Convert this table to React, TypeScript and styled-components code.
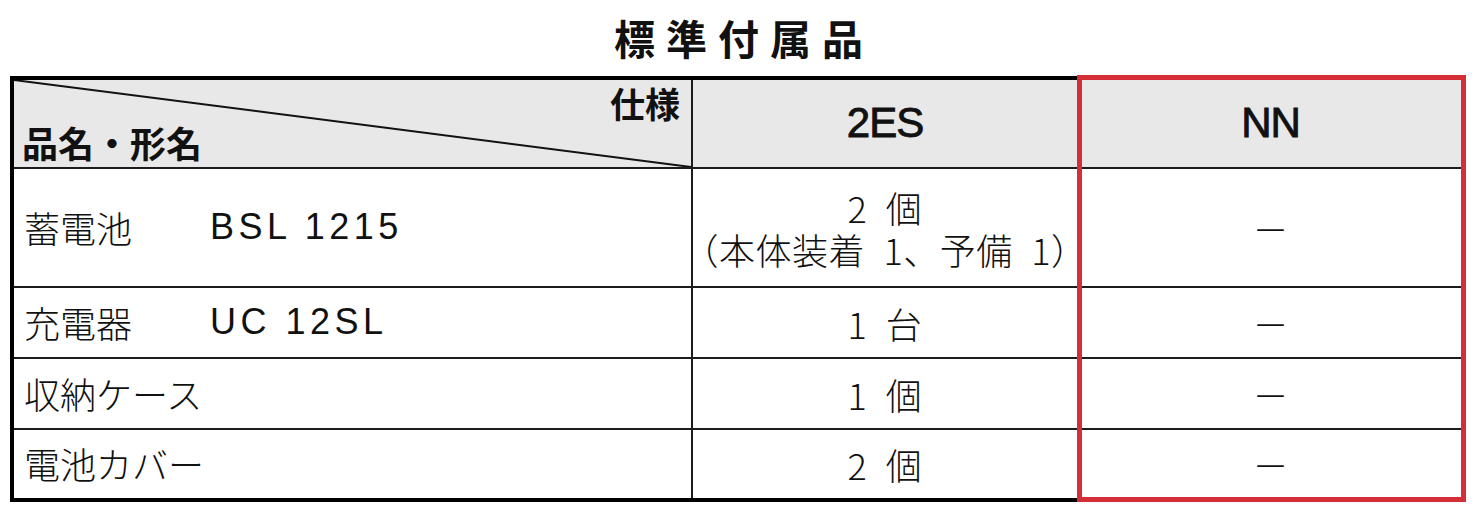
import React from "react";
import styled, { createGlobalStyle } from "styled-components";

const GlobalStyle = createGlobalStyle`
  html, body {
    margin: 0;
    padding: 0;
    background: #ffffff;
  }
  body {
    font-family: "Noto Sans CJK JP", "Liberation Sans", sans-serif;
    color: #111111;
  }
`;

interface Item {
  name: string;
  model?: string;
  spec: string[];
  nn: string;
}

const items: Item[] = [
  { name: "蓄電池", model: "BSL 1215", spec: ["2\u2002個", "（本体装着\u20021、予備\u20021）"], nn: "－" },
  { name: "充電器", model: "UC 12SL", spec: ["1\u2002台"], nn: "－" },
  { name: "収納ケース", spec: ["1\u2002個"], nn: "－" },
  { name: "電池カバー", spec: ["2\u2002個"], nn: "－" },
];

export default function App() {
  return (
    <>
      <GlobalStyle />
      <Page>
        <Title>標準付属品</Title>
        <Table>
          <CornerCell>
            <Diagonal viewBox="0 0 100 100" preserveAspectRatio="none">
              <line x1="0" y1="0" x2="100" y2="100" stroke="#111" strokeWidth="2" vectorEffect="non-scaling-stroke" />
            </Diagonal>
            <SpecLabel>仕様</SpecLabel>
            <NameLabel>品名・形名</NameLabel>
          </CornerCell>
          <HeadCell $col={2}>2ES</HeadCell>
          <HeadCell $col={3}>NN</HeadCell>

          {items.map((item, i) => (
            <React.Fragment key={item.name}>
              <NameCell $row={i + 2}>
                <ItemName>{item.name}</ItemName>
                {item.model && <Model>{item.model}</Model>}
              </NameCell>
              <ValueCell $row={i + 2} $col={2}>
                {item.spec.map((line) => (
                  <Line key={line}>{line}</Line>
                ))}
              </ValueCell>
              <ValueCell $row={i + 2} $col={3}>
                <Dash>{item.nn}</Dash>
              </ValueCell>
            </React.Fragment>
          ))}

          <Highlight />
        </Table>
      </Page>
    </>
  );
}

const Page = styled.div`
  width: 1456px;
  padding-left: 10px;
`;

const Title = styled.div`
  height: 76px;
  display: flex;
  align-items: center;
  justify-content: center;
  padding-left: 12px;
  padding-bottom: 2px;
  box-sizing: border-box;
  font-size: 41px;
  font-weight: 700;
  letter-spacing: 11px;
  line-height: 1;
`;

const Table = styled.div`
  display: grid;
  grid-template-columns: 677px 384px 383px;
  grid-template-rows: 87px 117px 69px 69px 68px;
  gap: 2px;
  background: #1c1c1c;
  border: 4px solid #000;
  width: 1448px;
`;

const HeadCell = styled.div<{ $col: number }>`
  grid-row: 1;
  grid-column: ${(p) => p.$col};
  background: #e8e8e8;
  display: flex;
  align-items: center;
  justify-content: center;
  font-family: "Liberation Sans", sans-serif;
  font-size: 42px;
  font-weight: 400;
  letter-spacing: -1px;
  -webkit-text-stroke: 0.9px #111;
  padding-bottom: 2px;
`;

const CornerCell = styled.div`
  grid-row: 1;
  grid-column: 1;
  position: relative;
  background: #e8e8e8;
  display: flex;
  flex-direction: column;
  justify-content: space-between;
  padding: 4px 11px 9px 8px;
  font-size: 36px;
  font-weight: 700;
  line-height: 1.1;
`;

const Diagonal = styled.svg`
  position: absolute;
  inset: 0;
  width: 100%;
  height: 100%;
`;

const SpecLabel = styled.span`
  align-self: flex-end;
  position: relative;
  font-size: 35px;
`;

const NameLabel = styled.span`
  align-self: flex-start;
  position: relative;
`;

const NameCell = styled.div<{ $row: number }>`
  grid-row: ${(p) => p.$row};
  grid-column: 1;
  background: #fff;
  display: flex;
  align-items: center;
  padding-left: 10px;
  padding-bottom: 2px;
  font-size: 36px;
  font-weight: 300;
`;

const ItemName = styled.span`
  width: 186px;
`;

const Model = styled.span`
  font-family: "Liberation Sans", "Noto Sans CJK JP", sans-serif;
  font-size: 36px;
  letter-spacing: 4.5px;
`;

const ValueCell = styled.div<{ $row: number; $col: number }>`
  grid-row: ${(p) => p.$row};
  grid-column: ${(p) => p.$col};
  background: #fff;
  display: flex;
  flex-direction: column;
  align-items: center;
  justify-content: center;
  font-size: 36px;
  font-weight: 300;
  line-height: 42px;
`;

const Line = styled.span`
  white-space: nowrap;
  letter-spacing: 0.5px;
`;

const Dash = styled.span`
  font-size: 36px;
`;

const Highlight = styled.div`
  grid-column: 3;
  grid-row: 1 / -1;
  margin: -5px -4px -4px -2px;
  border: 5px solid #d42e37;
  pointer-events: none;
`;
